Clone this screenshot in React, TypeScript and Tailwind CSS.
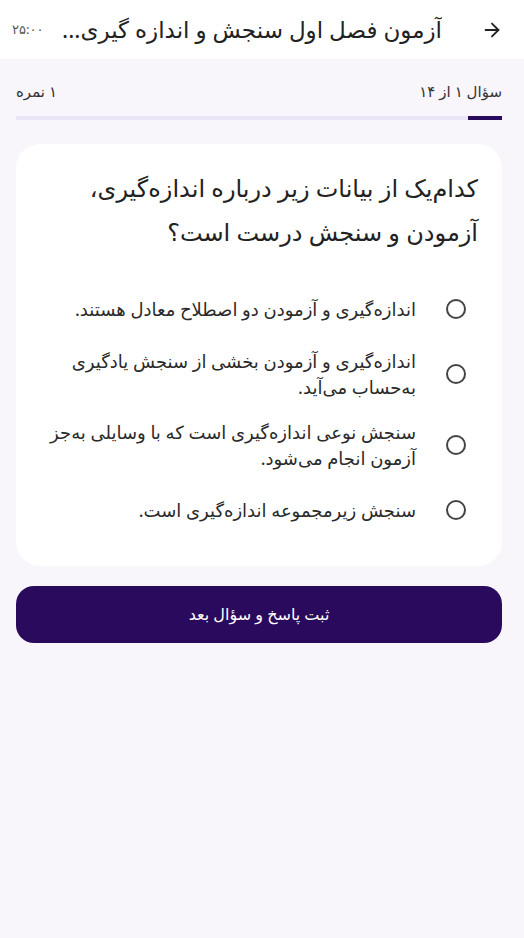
import React, { useState } from 'react';
import { ArrowRight } from 'lucide-react';

const options = [
  'اندازه‌گیری و آزمودن دو اصطلاح معادل هستند.',
  'اندازه‌گیری و آزمودن بخشی از سنجش یادگیری به‌حساب می‌آید.',
  'سنجش نوعی اندازه‌گیری است که با وسایلی به‌جز آزمون انجام می‌شود.',
  'سنجش زیرمجموعه اندازه‌گیری است.',
];

export default function App() {
  const [selected, setSelected] = useState<number | null>(null);

  return (
    <div dir="rtl" className="min-h-[938px] bg-[#f8f6fb] font-['Noto_Sans','DejaVu_Sans',sans-serif] text-[#1f1f1f]">
      {/* Header */}
      <div className="h-[59px] bg-white flex items-center pr-[21px] pl-[12px]">
        <button className="shrink-0 text-[#222]">
          <ArrowRight size={22} strokeWidth={2} />
        </button>
        <h1 className="flex-1 min-w-0 whitespace-nowrap overflow-hidden text-[23px] mr-[39px] ml-[16px] text-[#222]">
          آزمون فصل اول سنجش و اندازه گیری...
        </h1>
        <span className="shrink-0 text-[13px] text-[#555]">۲۵:۰۰</span>
      </div>

      <div className="pl-4 pr-[22px]">
        {/* Progress */}
        <div className="flex items-center justify-between pt-[21px] pb-[13px] text-[15px] text-[#333]">
          <span>سؤال ۱ از ۱۴</span>
          <span>۱ نمره</span>
        </div>
        <div className="h-[4px] bg-[#ebe3f7] flex">
          <div className="h-full w-[34px] bg-[#2a0a5c]" />
        </div>

        {/* Question card */}
        <div className="mt-[24px] bg-white rounded-[24px] pt-[22px] pb-9 px-6">
          <p className="text-[24px] leading-[44px] text-[#222] mb-[35px]">
            کدام‌یک از بیانات زیر درباره اندازه‌گیری، آزمودن و سنجش درست است؟
          </p>
          <div className="flex flex-col gap-[19px]">
            {options.map((opt, i) => (
              <button
                key={i}
                onClick={() => setSelected(i)}
                className="flex items-center min-h-[40px] pr-3 text-right"
              >
                <span className="shrink-0 w-5 h-5 rounded-full border-2 border-[#444] flex items-center justify-center">
                  {selected === i && <span className="w-2.5 h-2.5 rounded-full bg-[#2a0a5c]" />}
                </span>
                <span className="flex-1 mr-[30px] text-[18px] leading-[26px] text-[#2a2a2a]">{opt}</span>
              </button>
            ))}
          </div>
        </div>

        {/* Submit */}
        <button className="mt-5 w-full h-[57px] rounded-[18px] bg-[#2a0a5c] text-white text-[16px] font-medium">
          ثبت پاسخ و سؤال بعد
        </button>
      </div>
    </div>
  );
}
